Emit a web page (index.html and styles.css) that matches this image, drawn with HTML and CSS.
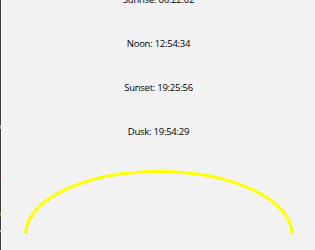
FILE: index.html
```html
<!DOCTYPE html>
<html>
<head>
<meta charset="utf-8">
<link rel="stylesheet" href="styles.css">
</head>
<body>
<div class="frame">
  <div class="edge"></div>
  <div class="content">
    <div class="times">
      <div class="row">Sunrise: 06:22:02</div>
      <div class="row">Noon: 12:54:34</div>
      <div class="row">Sunset: 19:25:56</div>
      <div class="row">Dusk: 19:54:29</div>
    </div>
    <svg class="arc" width="313" height="82" viewBox="0 0 313 82">
      <path d="M 23.8 66 A 133.1 62.5 0 0 1 290 66" fill="none" stroke="#ffff00" stroke-width="3"/>
    </svg>
  </div>
</div>
</body>
</html>
```
FILE: styles.css
```css
html, body {
  margin: 0;
  padding: 0;
  width: 315px;
  height: 250px;
  overflow: hidden;
  background: #f2f2f2;
}
.frame {
  display: flex;
  width: 315px;
  height: 250px;
  overflow: hidden;
}
.edge {
  width: 1px;
  flex: none;
  border-right: 1px solid #fbfbfb;
  background: linear-gradient(to bottom,
    #3a3a3a 0, #3a3a3a 125px,
    #b09a80 125px, #b09a80 129px,
    #3a3a3a 129px, #3a3a3a 176px,
    #7a3a3a 176px, #7a3a3a 178px,
    #3a3a3a 178px, #3a3a3a 212px,
    #6a8a3a 212px, #6a8a3a 216px,
    #3a3a3a 216px, #3a3a3a 230px,
    #b0b0b0 230px, #b0b0b0 232px,
    #3a3a3a 232px);
}
.content {
  flex: 1;
  display: flex;
  flex-direction: column;
}
.times {
  display: flex;
  flex-direction: column;
  align-items: center;
  margin-top: -8px;
}
.row {
  height: 44px;
  font-family: "Open Sans", "Noto Sans", sans-serif;
  font-size: 9.5px;
  letter-spacing: -0.25px;
  line-height: 16px;
  color: #000;
}
.arc {
  display: block;
  flex: none;
}
```
